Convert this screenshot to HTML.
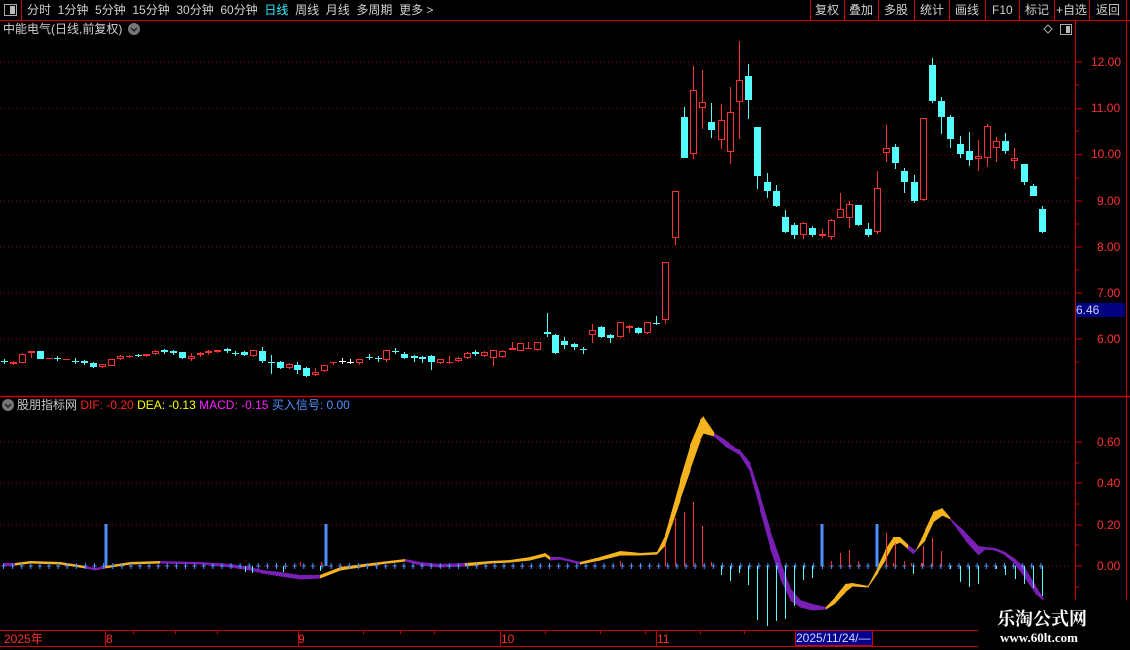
<!DOCTYPE html>
<html><head><meta charset="utf-8">
<style>
html,body{margin:0;padding:0;background:#000;width:1130px;height:650px;overflow:hidden;font-family:"Liberation Sans","Noto Sans CJK SC",sans-serif;}
.t{position:absolute;white-space:nowrap;font-size:12px;line-height:14px;}
svg{position:absolute;left:0;top:0}
</style></head><body>
<svg id="s" width="1130" height="650" xmlns="http://www.w3.org/2000/svg"></svg>

<div class="t" style="left:27px;top:3px;color:#d0d0d0;letter-spacing:0">分时&nbsp;&nbsp;1分钟&nbsp;&nbsp;5分钟&nbsp;&nbsp;15分钟&nbsp;&nbsp;30分钟&nbsp;&nbsp;60分钟&nbsp;&nbsp;<span style="color:#3ef">日线</span>&nbsp;&nbsp;周线&nbsp;&nbsp;月线&nbsp;&nbsp;多周期&nbsp;&nbsp;更多 &gt;</div>
<div class="t" style="left:815px;top:3px;color:#d0d0d0">复权</div>
<div class="t" style="left:849px;top:3px;color:#d0d0d0">叠加</div>
<div class="t" style="left:884px;top:3px;color:#d0d0d0">多股</div>
<div class="t" style="left:920px;top:3px;color:#d0d0d0">统计</div>
<div class="t" style="left:955px;top:3px;color:#d0d0d0">画线</div>
<div class="t" style="left:992px;top:3px;color:#d0d0d0">F10</div>
<div class="t" style="left:1025px;top:3px;color:#d0d0d0">标记</div>
<div class="t" style="left:1056px;top:3px;color:#d0d0d0">+自选</div>
<div class="t" style="left:1096px;top:3px;color:#d0d0d0">返回</div>
<div class="t" style="left:3px;top:22px;color:#d0d0d0">中能电气(日线,前复权)</div>
<div class="t" style="left:17px;top:398px;"><span style="color:#c8c8c8">股朋指标网</span> <span style="color:#ff2020">DIF: -0.20</span> <span style="color:#ffff00">DEA: -0.13</span> <span style="color:#ff20ff">MACD: -0.15</span> <span style="color:#5090ff">买入信号: 0.00</span></div>

<div class="t" style="left:1091px;top:55px;color:#ff3030">12.00</div>
<div class="t" style="left:1091px;top:101px;color:#ff3030">11.00</div>
<div class="t" style="left:1091px;top:147px;color:#ff3030">10.00</div>
<div class="t" style="left:1097px;top:194px;color:#ff3030">9.00</div>
<div class="t" style="left:1097px;top:240px;color:#ff3030">8.00</div>
<div class="t" style="left:1097px;top:286px;color:#ff3030">7.00</div>
<div class="t" style="left:1097px;top:332px;color:#ff3030">6.00</div>
<div class="t" style="left:1076px;top:303px;color:#d0d0ff;background:#000080;width:49px;height:14px">6.46</div>
<div class="t" style="left:1097px;top:435px;color:#ff3030">0.60</div>
<div class="t" style="left:1097px;top:476px;color:#ff3030">0.40</div>
<div class="t" style="left:1097px;top:518px;color:#ff3030">0.20</div>
<div class="t" style="left:1097px;top:559px;color:#ff3030">0.00</div>

<div class="t" style="left:4px;top:632px;color:#ff3030">2025年</div>
<div class="t" style="left:106px;top:632px;color:#ff3030">8</div>
<div class="t" style="left:298px;top:632px;color:#ff3030">9</div>
<div class="t" style="left:501px;top:632px;color:#ff3030">10</div>
<div class="t" style="left:657px;top:632px;color:#ff3030">11</div>
<div class="t" style="left:795px;top:631px;color:#d8d8ff;background:#000090;width:76px;height:14px;border:1px solid #c00;border-top:none">2025/11/24/—</div>
<div style="position:absolute;left:978px;top:600px;width:152px;height:50px;background:#000"></div>
<div class="t" style="left:997px;top:607px;color:#fff;font-size:18px;line-height:22px;font-weight:bold;font-family:'Noto Serif CJK SC','Noto Sans CJK SC',serif">乐淘公式网</div>
<div class="t" style="left:1000px;top:631px;color:#fff;font-size:13px;font-weight:bold;font-family:'Liberation Serif',serif">www.60lt.com</div>

<script>
var s=document.getElementById('s'),h='';
function L(x1,y1,x2,y2,c,w,d){h+='<line x1="'+x1+'" y1="'+y1+'" x2="'+x2+'" y2="'+y2+'" stroke="'+c+'" stroke-width="'+(w||1)+'"'+(d?' stroke-dasharray="'+d+'"':'')+'/>';}
function R(x,y,w,hh,f,st){h+='<rect x="'+x+'" y="'+y+'" width="'+w+'" height="'+hh+'" fill="'+f+'"'+(st?' stroke="'+st+'"':'')+'/>';}
// toolbar
L(0,20.5,1130,20.5,'#c00');
L(21.5,0,21.5,20,'#c00');
R(4.5,4.5,12,11,'none','#aaa');R(10,6,5,8,'#bbb');
[810,844,878,914,949,985,1019,1054,1089,1126].forEach(function(x){L(x+.5,0,x+.5,20,'#c00');});
// title icon
h+='<circle cx="134" cy="29" r="6" fill="#777"/><path d="M131 28 L134 31 L137 28" stroke="#222" stroke-width="1.5" fill="none"/>';
h+='<path d="M1048 25 L1052 29 L1048 33 L1044 29Z" fill="none" stroke="#aaa"/>';
R(1060.5,24.5,11,10,'none','#aaa');R(1066,26,4,7,'#bbb');
h+='<circle cx="8" cy="405" r="6" fill="#777"/><path d="M5 404 L8 407 L11 404" stroke="#222" stroke-width="1.5" fill="none"/>';
// axes
L(1075.5,20,1075.5,630,'#c00');L(1126.5,20,1126.5,600,'#c00');
L(0,396.5,1130,396.5,'#c00',1.5);
L(0,630.5,978,630.5,'#c00');L(0,646.5,978,646.5,'#c00');
[62,108.7,154.7,201,247,293,339].forEach(function(y){L(0,y,1072,y,'#900',1,'1 3');L(1076,y,1082,y,'#c00');});
[85,131,178,224,270,316,362].forEach(function(y){L(1076,y,1079,y,'#c00');});
[442,483,525,566].forEach(function(y){L(0,y,1072,y,'#900',1,'1 3');L(1076,y,1082,y,'#c00');});
[463,504,545,587].forEach(function(y){L(1076,y,1079,y,'#c00');});
[105,298,500,656].forEach(function(x){L(x+.5,630,x+.5,646,'#c00');});
[133,175,217,363,400,434,545,600,645,700,744].forEach(function(x){L(x+.5,630,x+.5,634,'#c00');});
// candles [x,col,top,bot,wt,wb]
var C=[[4,'c',361,362,359,364],[13,'R',362,364,361,365],[22,'r',354,363,353,363],[31,'r',351,353,351,358],[40,'c',351,359,351,359],[49,'R',358,359,358,359],[57,'c',358,358,356,361],[66,'R',359,360,359,360],[75,'c',361,361,358,364],[84,'c',361,363,360,365],[93,'c',363,367,362,368],[102,'r',364,367,364,368],[111,'r',359,366,359,366],[120,'r',356,359,355,360],[129,'R',356,357,355,358],[138,'c',355,356,354,357],[146,'r',354,356,354,357],[155,'r',351,354,350,355],[164,'c',350,352,349,354],[173,'c',351,353,350,355],[182,'c',352,358,352,359],[191,'r',356,359,353,361],[200,'R',353,355,352,357],[208,'R',351,353,350,355],[217,'R',350,352,350,353],[227,'c',349,351,348,353],[235,'c',353,353,351,356],[244,'c',352,355,351,356],[253,'r',350,356,350,357],[262,'c',351,361,347,363],[271,'c',362,362,355,374],[280,'c',362,368,361,369],[289,'r',364,368,363,369],[297,'c',365,370,362,374],[306,'c',368,376,367,377],[315,'r',372,375,368,376],[324,'r',365,371,365,372],[333,'R',362,363,362,365],[342,'w',361,361,358,364],[350,'w',362,362,359,364],[359,'r',359,363,359,365],[369,'c',357,357,354,360],[378,'c',358,358,356,362],[386,'r',350,360,350,362],[395,'c',351,351,348,354],[404,'c',354,358,352,359],[414,'c',356,358,355,362],[422,'c',357,359,356,363],[431,'c',356,362,355,370],[440,'r',359,363,359,364],[449,'R',362,363,356,364],[458,'r',358,361,357,362],[467,'r',353,358,352,359],[475,'c',352,354,350,356],[484,'r',352,356,351,357],[493,'r',350,358,350,366],[502,'r',351,357,350,358],[512,'R',348,350,342,350],[520,'r',343,351,343,351],[528,'R',348,349,342,349],[537,'r',342,350,342,351],[547,'c',332,334,313,337],[555,'c',335,353,334,354],[564,'c',341,345,337,349],[574,'c',344,347,343,350],[583,'c',349,349,347,354],[592,'r',330,335,324,343],[601,'c',327,337,326,338],[610,'c',335,338,334,343],[620,'r',322,337,322,338],[629,'r',326,328,325,333],[638,'c',328,333,327,334],[647,'r',322,333,322,334],[656,'c',323,323,316,325],[665,'r',262,320,262,324],[675,'r',191,238,191,245],[684,'c',117,158,107,158],[693,'r',90,154,66,159],[702,'r',102,108,70,129],[711,'c',122,130,103,138],[721,'r',120,140,104,149],[730,'r',112,152,87,164],[739,'r',80,102,41,139],[748,'c',76,100,64,119],[757,'c',127,176,127,189],[767,'c',182,191,173,198],[776,'c',191,206,185,207],[785,'c',217,232,210,233],[794,'c',225,235,223,239],[803,'r',223,235,222,239],[812,'c',228,235,226,237],[822,'R',234,236,229,238],[831,'r',220,237,219,240],[840,'r',209,218,193,218],[849,'r',204,218,201,228],[858,'c',205,225,205,226],[868,'c',229,235,223,237],[877,'r',188,232,171,234],[886,'r',148,153,125,162],[895,'c',147,163,144,169],[904,'c',171,182,168,193],[914,'c',182,201,175,203],[923,'r',118,200,118,201],[932,'c',65,101,58,103],[941,'c',101,117,97,134],[950,'c',117,139,115,148],[960,'c',144,154,136,158],[969,'c',151,160,132,166],[978,'r',156,159,140,171],[987,'r',126,158,124,167],[996,'r',141,148,137,162],[1005,'c',141,151,133,154],[1014,'r',158,161,148,169],[1024,'c',164,182,164,185],[1033,'c',186,196,184,196],[1042,'c',209,232,206,233]];
C.forEach(function(k){var x=k[0],c=k[1],col=c=='c'?'#54fcfc':(c=='w'?'#fff':'#ff3030');
 L(x+.5,k[4],x+.5,k[5],col);
 if(k[2]==k[3]){L(x-3,k[2]+.5,x+4,k[2]+.5,col);return;}
 if(c=='r')R(x-2.5,k[2]+.5,6,k[3]-k[2]-1,'#000',col);
 else R(x-3,k[2],7,Math.max(1,k[3]-k[2]),col);
});
// MACD band [x,top,bot,color to next]
var O='#f5b41e',P='#7a1fb5';
var B=[[3,563,566,P],[15,563,565,O],[30,561,563,O],[60,562,564,O],[85,566,568,P],[95,568,570,P],[105,566,568,O],[130,562,564,O],[160,561,563,P],[200,562,564,P],[230,564,567,P],[250,567,570,P],[262,570,573,P],[280,572,576,P],[300,575,579,P],[320,575,578,O],[340,567,570,O],[380,562,564,O],[405,559,561,P],[420,562,565,P],[440,564,567,P],[465,563,566,O],[490,561,563,O],[510,560,562,O],[530,557,560,O],[545,553,556,O],[550,557,560,P],[560,557,559,P],[580,562,564,O],[600,557,560,O],[620,551,555,O],[640,553,555,O],[657,552,554,O],[665,535,545,O],[680,480,500,O],[690,445,470,O],[700,420,440,O],[703,416,433,O],[714,433,436,P],[725,440,446,P],[735,448,452,P],[740,450,455,P],[750,463,472,P],[760,495,510,P],[770,530,548,P],[780,560,578,P],[790,588,600,P],[800,600,607,P],[812,604,610,P],[826,607,609,O],[835,597,603,O],[845,584,592,O],[852,583,586,O],[868,586,587,O],[878,566,572,O],[885,550,560,O],[893,537,545,O],[900,537,542,O],[908,545,549,P],[913,549,554,P],[916,550,550,O],[925,530,540,O],[933,512,522,O],[942,508,515,O],[950,518,519,P],[965,532,540,P],[978,546,555,P],[985,547,549,P],[995,548,550,P],[1005,552,555,P],[1015,559,564,P],[1025,568,578,P],[1035,585,593,P],[1043,598,600,P]];
for(var i=0;i<B.length-1;i++){var a=B[i],b=B[i+1];
 h+='<polygon points="'+a[0]+','+a[1]+' '+(b[0]+.6)+','+b[1]+' '+(b[0]+.6)+','+(b[2]+.5)+' '+a[0]+','+(a[2]+.5)+'" fill="'+a[3]+'"/>';}
// zero-line blue markers
for(var x=3.5;x<1045;x+=9.1){L(x,563,x,569,'#4a90ff');L(x-2,566,x+2,566,'#4a90ff');}
// histogram
var HB=[[620,561],[665,544],[675,518],[684,512],[693,502],[702,526],[711,562],[831,561],[840,553],[849,550],[858,561],[886,533],[895,543],[904,561],[923,546],[932,538],[941,551],[300,562],[321,562],[877,563],[893,563],[911,563],[921,563]];
HB.forEach(function(k){L(k[0]+.5,k[1],k[0]+.5,566,'#ff3030');});
var HC=[[721,575],[730,581],[739,573],[748,585],[757,620],[767,626],[776,621],[785,619],[794,606],[803,580],[812,578],[913,574],[950,569],[960,582],[969,587],[978,584],[996,569],[1005,575],[1015,579],[1024,584],[1033,588],[1042,596],[245,572],[252,573],[283,572],[320,571]];
HC.forEach(function(k){L(k[0]+.5,566,k[0]+.5,k[1],'#54fcfc');});
[106,326,822,877].forEach(function(x){R(x-1.5,524,3,42,'#4a90ff');});
s.innerHTML=h;
</script>
</body></html>
